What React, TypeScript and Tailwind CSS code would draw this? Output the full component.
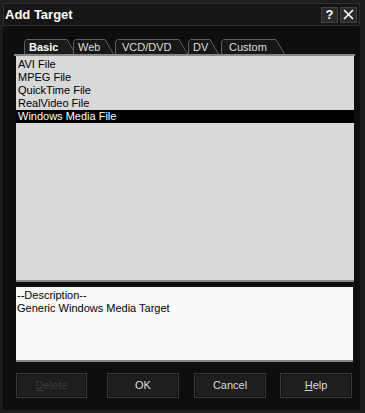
import React from "react";

const font = { fontFamily: '"Liberation Sans", Arial, sans-serif' };

function Tab({ label, width, pl, ml, selected }: { label: string; width: number; pl: number; ml: number; selected?: boolean }) {
  const w = width;
  return (
    <div className="relative h-[15px] shrink-0" style={{ width: w, marginLeft: ml }}>
      <svg className="absolute left-0 top-0" width={w} height={15} viewBox={`0 0 ${w} 15`}>
        <path
          d={`M0.5 15 L0.5 2.5 L2.5 0.5 L${w - 9} 0.5 L${w - 0.5} 15`}
          fill={selected ? "#1b1b1b" : "#171717"}
          stroke="#5e5e5e"
          strokeWidth="1"
        />
      </svg>
      <span
        className={`relative block text-[11px] leading-[13px] pt-[2px] ${selected ? "font-bold text-white" : "text-[#dedede]"}`}
        style={{ paddingLeft: pl }}
      >
        {label}
      </span>
    </div>
  );
}

function Btn({ children, disabled, w, ml }: { children: React.ReactNode; disabled?: boolean; w: number; ml: number }) {
  return (
    <div
      className={`h-[25px] flex items-center justify-center text-[11px] border border-[#383838] bg-[#1e1e1e] shadow-[inset_1px_1px_0_#121212,inset_-1px_-1px_0_#121212] ${
        disabled ? "text-[#3c3c3c]" : "text-[#dcdcdc]"
      }`}
      style={{ width: w, marginLeft: ml }}
    >
      {children}
    </div>
  );
}

export default function App() {
  return (
    <div className="w-[365px] h-[413px] bg-[#1d1d1d] p-[3px] pl-[3px] pr-[5px] flex flex-col" style={font}>
      <div className="h-[23px] bg-[#151515] border border-[#2e2e2e] flex items-center justify-between pl-[1px] pr-[2px]">
        <span className="text-white font-bold text-[13px] leading-none">Add Target</span>
        <div className="flex gap-[2px]">
          <div className="w-[17px] h-[16px] bg-[#2b2b2b] border border-[#404040] flex items-center justify-center text-white font-bold text-[13px] leading-none">
            ?
          </div>
          <div className="w-[17px] h-[16px] bg-[#2b2b2b] border border-[#404040] flex items-center justify-center">
            <svg width="11" height="11" viewBox="0 0 11 11">
              <path d="M1 1 L10 10 M10 1 L1 10" stroke="white" strokeWidth="1.6" />
            </svg>
          </div>
        </div>
      </div>
      <div className="flex-1 bg-[#0e0e0e] flex flex-col pl-[13px] pr-[3px] pb-[12px]">
        <div className="flex mt-[13px]">
          <Tab label="Basic" width={52} ml={8} pl={5} selected />
          <Tab label="Web" width={41} ml={-3} pl={5} />
          <Tab label="VCD/DVD" width={73} ml={1} pl={7} />
          <Tab label="DV" width={31} ml={0} pl={5} />
          <Tab label="Custom" width={64} ml={2} pl={8} />
        </div>
        <div className="h-[2px] bg-[#8a8a8a] w-[341px] -ml-[2px]" />
        <div className="w-[338px] h-[226px] bg-[#d9d9d9] border-b-2 border-[#8a8a8a] pt-[2px] text-[11px] leading-[13px] text-black">
          <div className="pl-[2px]">AVI File</div>
          <div className="pl-[2px]">MPEG File</div>
          <div className="pl-[2px]">QuickTime File</div>
          <div className="pl-[2px]">RealVideo File</div>
          <div className="pl-[2px] bg-black text-white">Windows Media File</div>
        </div>
        <div className="mt-[5px] w-[337px] h-[75px] bg-[#fafafa] border-b-2 border-[#8a8a8a] pt-[2px] pl-[1px] text-[11px] leading-[13px] text-black">
          <div>--Description--</div>
          <div>Generic Windows Media Target</div>
        </div>
        <div className="mt-[11px] flex">
          <Btn disabled w={71} ml={0}>
            <span className="underline">D</span>elete
          </Btn>
          <Btn w={72} ml={20}>OK</Btn>
          <Btn w={72} ml={15}>Cancel</Btn>
          <Btn w={72} ml={14}>
            <span className="underline">H</span>elp
          </Btn>
        </div>
      </div>
    </div>
  );
}
